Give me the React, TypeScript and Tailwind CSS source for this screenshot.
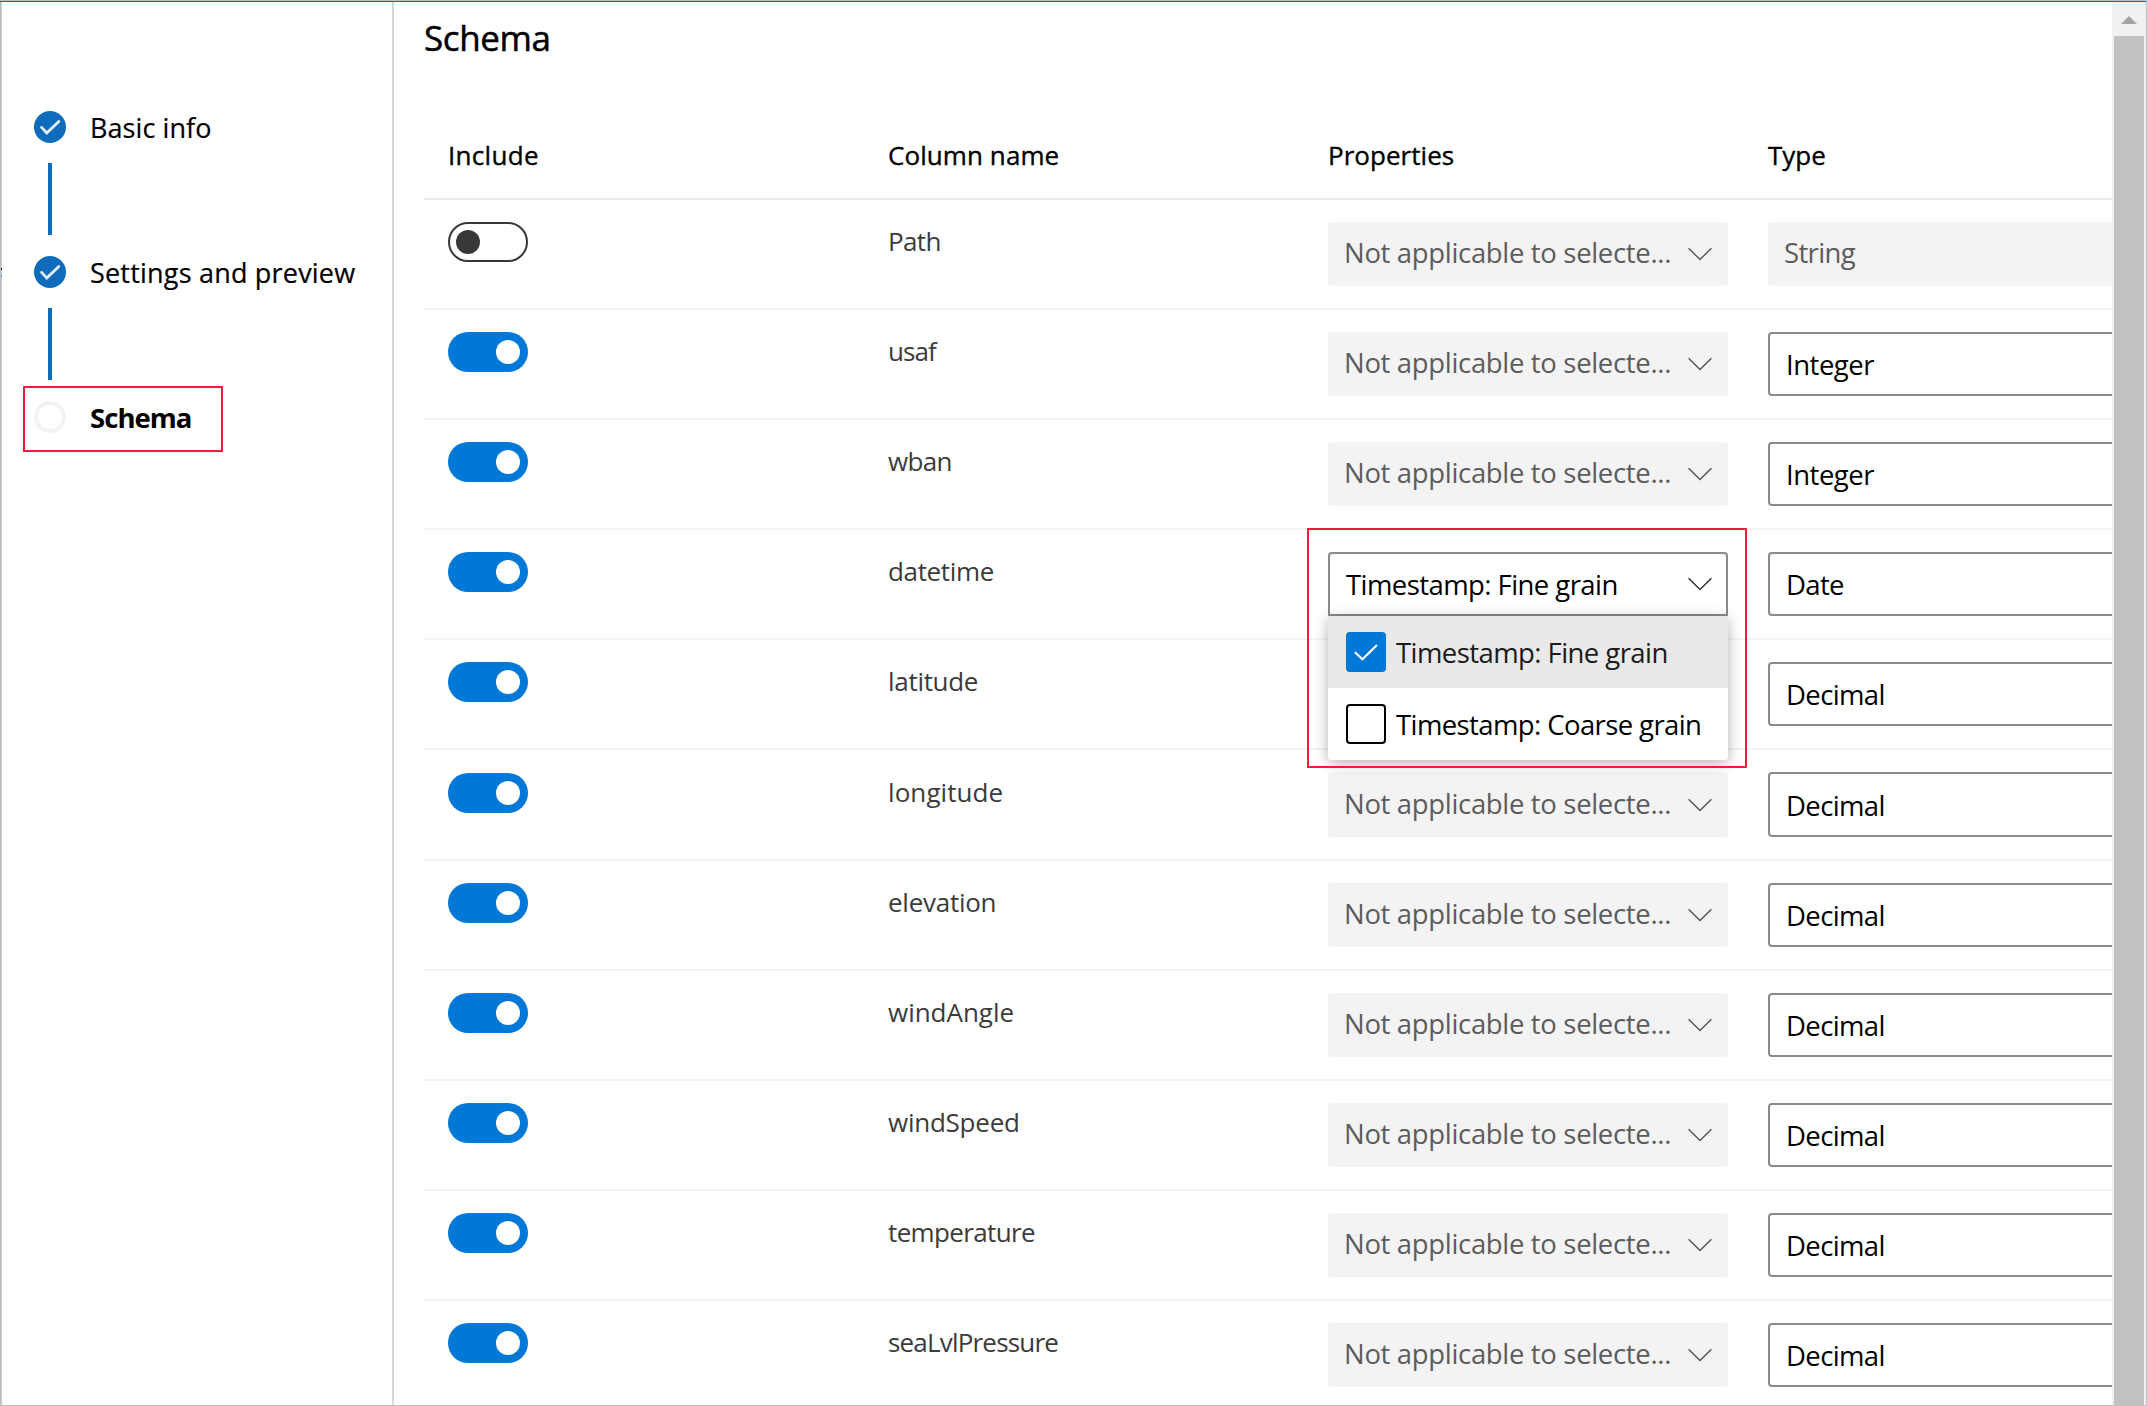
import { Fragment } from "react";

type Step = { label: string; text: string; state: "done" | "current" };

const steps: Step[] = [
  {
    label: "Basic info",
    text: "font-medium text-[27px] tracking-[0.08px] [-webkit-text-stroke:0.2px_black]",
    state: "done",
  },
  {
    label: "Settings and preview",
    text: "font-medium text-[27px] tracking-[0.2px] [-webkit-text-stroke:0.2px_black]",
    state: "done",
  },
  { label: "Schema", text: "font-bold text-[27.5px] tracking-[-0.95px]", state: "current" },
];

const headers = [
  { label: "Include", tracking: "tracking-[0.3px]" },
  { label: "Column name", tracking: "tracking-[0.08px]" },
  { label: "Properties", tracking: "tracking-[0.04px]" },
  { label: "Type", tracking: "tracking-[0px]" },
];

type Row = {
  name: string;
  tracking: string;
  type: string;
  off?: boolean;
  open?: boolean;
  covered?: boolean;
  tall?: boolean;
};

const rows: Row[] = [
  { name: "Path", tracking: "tracking-[-0.65px]", type: "String", off: true },
  { name: "usaf", tracking: "tracking-[-0.9px]", type: "Integer" },
  { name: "wban", tracking: "tracking-[-0.67px]", type: "Integer" },
  { name: "datetime", tracking: "tracking-[-0.35px]", type: "Date", open: true },
  { name: "latitude", tracking: "tracking-[-0.3px]", type: "Decimal", covered: true },
  { name: "longitude", tracking: "tracking-[0.08px]", type: "Decimal", tall: true },
  { name: "elevation", tracking: "tracking-[-0.26px]", type: "Decimal" },
  { name: "windAngle", tracking: "tracking-[-0.02px]", type: "Decimal" },
  { name: "windSpeed", tracking: "tracking-[-0.24px]", type: "Decimal" },
  { name: "temperature", tracking: "tracking-[-0.64px]", type: "Decimal" },
  { name: "seaLvlPressure", tracking: "tracking-[-0.81px]", type: "Decimal" },
];

const typeTracking: Record<string, string> = {
  String: "tracking-[-0.65px]",
  Integer: "tracking-[-0.48px]",
  Date: "tracking-[-0.65px]",
  Decimal: "tracking-[-0.62px]",
};

function StepMark({ state }: { state: Step["state"] }) {
  if (state === "current") {
    return <span className="size-8 shrink-0 rounded-full border-4 border-[#f3f2f1]" />;
  }
  return (
    <span className="size-8 shrink-0 rounded-full bg-[#0f6cbd]">
      <svg viewBox="0 0 32 32" className="size-8" fill="none" stroke="#e6f2fb" strokeWidth="2.8" strokeLinecap="round" strokeLinejoin="miter">
        <path d="M7.6 16.4 12.8 22 24.8 10.4" />
      </svg>
    </span>
  );
}

function Sidebar() {
  return (
    <aside className="relative w-[394px] shrink-0 border-r-2 border-[#d6d6d6] pt-[109px] pl-[34px]">
      {steps.map((step, i) => (
        <Fragment key={step.label}>
          {i > 0 && <div className="mt-5 mb-[21px] ml-[14px] h-[72px] w-1 bg-[#0f6cbd]" />}
          <div className="relative flex h-8 items-center gap-6">
            <StepMark state={step.state} />
            <span className={`pt-[2px] whitespace-nowrap ${step.text}`}>{step.label}</span>
            {step.state === "current" && (
              <div className="absolute -top-[15px] -left-[11px] h-[66px] w-[200px] border-2 border-[#ee1c3c]" />
            )}
          </div>
        </Fragment>
      ))}
    </aside>
  );
}

function Toggle({ off, tall }: { off?: boolean; tall?: boolean }) {
  return off ? (
    <div className="flex h-10 w-20 items-center rounded-full border-2 border-[#383838] pl-[6px]">
      <span className="size-6 rounded-full bg-[#383838]" />
    </div>
  ) : (
    <div
      className={`flex h-10 w-20 items-center justify-end rounded-full bg-[#0078d7] pr-2 ${tall ? "mt-px" : ""}`}
    >
      <span className="size-6 rounded-full bg-white" />
    </div>
  );
}

function Chevron({ color }: { color: string }) {
  return (
    <svg viewBox="0 0 24 14" className="h-[14px] w-6 shrink-0" fill="none" stroke={color} strokeWidth="1.4">
      <path d="M0.6 1.2 12 12.6 23.4 1.2" />
    </svg>
  );
}

function NotApplicable({ tall, covered }: { tall?: boolean; covered?: boolean }) {
  return (
    <div
      className={`flex w-[400px] items-center justify-between rounded bg-[#f3f3f3] px-4 ${tall ? "h-[65px]" : "h-16"} ${covered ? "invisible" : ""}`}
    >
      <span className="pb-[2px] text-[27.5px] tracking-[-0.33px] whitespace-nowrap text-[#5c5c5c]">
        Not applicable to selecte...
      </span>
      <Chevron color="#555555" />
    </div>
  );
}

function TypeBox({ row }: { row: Row }) {
  const height = row.tall ? "h-[65px]" : "h-16";
  const look = row.off
    ? "bg-[#f3f3f3] pb-[2px] pl-4 text-[#5c5c5c]"
    : "border-2 border-[#8a8a8a] bg-white pt-[2px] pl-4 text-black";
  return (
    <div
      className={`flex w-[400px] items-center rounded text-[27.5px] ${height} ${look} ${typeTracking[row.type]}`}
    >
      {row.type}
    </div>
  );
}

function TimestampSelect() {
  return (
    <div className="relative w-[400px]">
      <div className="flex h-16 items-center justify-between rounded-t border-2 border-[#8a8a8a] bg-white pr-[14px] pl-4">
        <span className="pt-[2px] text-[27.5px] tracking-[-0.57px] whitespace-nowrap">Timestamp: Fine grain</span>
        <Chevron color="#333333" />
      </div>
      <div className="absolute top-16 left-0 z-10 w-[400px] rounded-b bg-white shadow-[0_3px_14px_rgba(0,0,0,0.3)]">
        <div className="flex h-[72px] items-center gap-[10px] bg-[#e9e9e9] pl-[18px]">
          <span className="size-10 rounded-[4px] bg-[#0078d7]">
            <svg viewBox="0 0 40 40" className="size-10" fill="none" stroke="#ffffff" strokeWidth="2.2">
              <path d="M9 20.2 16.4 27.2 31 13" />
            </svg>
          </span>
          <span className="pt-[2px] text-[27.5px] tracking-[-0.57px] whitespace-nowrap text-[#1b1b1b]">
            Timestamp: Fine grain
          </span>
        </div>
        <div className="flex h-[72px] items-center gap-[10px] pl-[18px]">
          <span className="size-10 rounded-[4px] border-2 border-black bg-white" />
          <span className="pt-[2px] text-[27.5px] tracking-[-0.6px] whitespace-nowrap">Timestamp: Coarse grain</span>
        </div>
      </div>
      <div className="absolute -top-6 -left-[21px] z-20 h-[240px] w-[440px] border-2 border-[#f5193a]" />
    </div>
  );
}

function SchemaTable() {
  return (
    <div className="w-[1784px]">
      <div className="grid h-[84px] grid-cols-[440px_440px_440px_440px] border-b-2 border-[#e9e9e9] pl-6">
        {headers.map((h) => (
          <div
            key={h.label}
            className={`pt-[19px] text-[26px] leading-[40px] font-medium [-webkit-text-stroke:0.35px_black] ${h.tracking}`}
          >
            {h.label}
          </div>
        ))}
      </div>
      {rows.map((row) => (
        <div
          key={row.name}
          className={`grid grid-cols-[440px_440px_440px_440px] items-start border-b-2 border-[#f3f3f3] pt-[22px] pl-6 ${row.tall ? "h-[111px]" : "h-[110px]"}`}
        >
          <Toggle off={row.off} tall={row.tall} />
          <div
            className={`text-[26px] leading-[40px] text-[#3b3b3b] ${row.tracking} ${row.tall ? "" : "-mt-px"}`}
          >
            {row.name}
          </div>
          {row.open ? <TimestampSelect /> : <NotApplicable tall={row.tall} covered={row.covered} />}
          <TypeBox row={row} />
        </div>
      ))}
    </div>
  );
}

function Scrollbar() {
  return (
    <div className="flex w-[34px] shrink-0 flex-col items-center bg-[#f1f1f1]">
      <div className="flex h-[34px] w-full justify-center pt-[14px]">
        <svg viewBox="0 0 16 8" className="h-2 w-4" fill="#a3a3a3">
          <path d="M8 0 16 8H0z" />
        </svg>
      </div>
      <div className="w-[30px] flex-1 bg-[#c1c1c1]" />
    </div>
  );
}

export default function App() {
  return (
    <div className="flex h-[1406px] w-[2147px] flex-col overflow-hidden border-t border-r border-b border-[#c0c0c0] bg-white font-['Open_Sans',sans-serif] text-black">
      <div className="h-px shrink-0 bg-[#0f6cb4]" />
      <div className="relative flex min-h-0 flex-1">
        <div className="absolute inset-y-0 left-0 z-10 w-[2px] border-r border-[#cecece] bg-[#bcbcbc]">
          <span className="absolute top-[266px] left-px h-[2px] w-px bg-[#1a1a5c]" />
          <span className="absolute top-[273px] left-px h-[2px] w-px bg-[#5a9bd0]" />
        </div>
        <Sidebar />
        <main className="min-w-0 flex-1 overflow-hidden pl-[30px]">
          <h1 className="h-[114px] pt-[12px] text-[35px] leading-[48px] font-medium tracking-[-0.4px] [-webkit-text-stroke:0.5px_black]">
            Schema
          </h1>
          <SchemaTable />
        </main>
        <Scrollbar />
      </div>
    </div>
  );
}
